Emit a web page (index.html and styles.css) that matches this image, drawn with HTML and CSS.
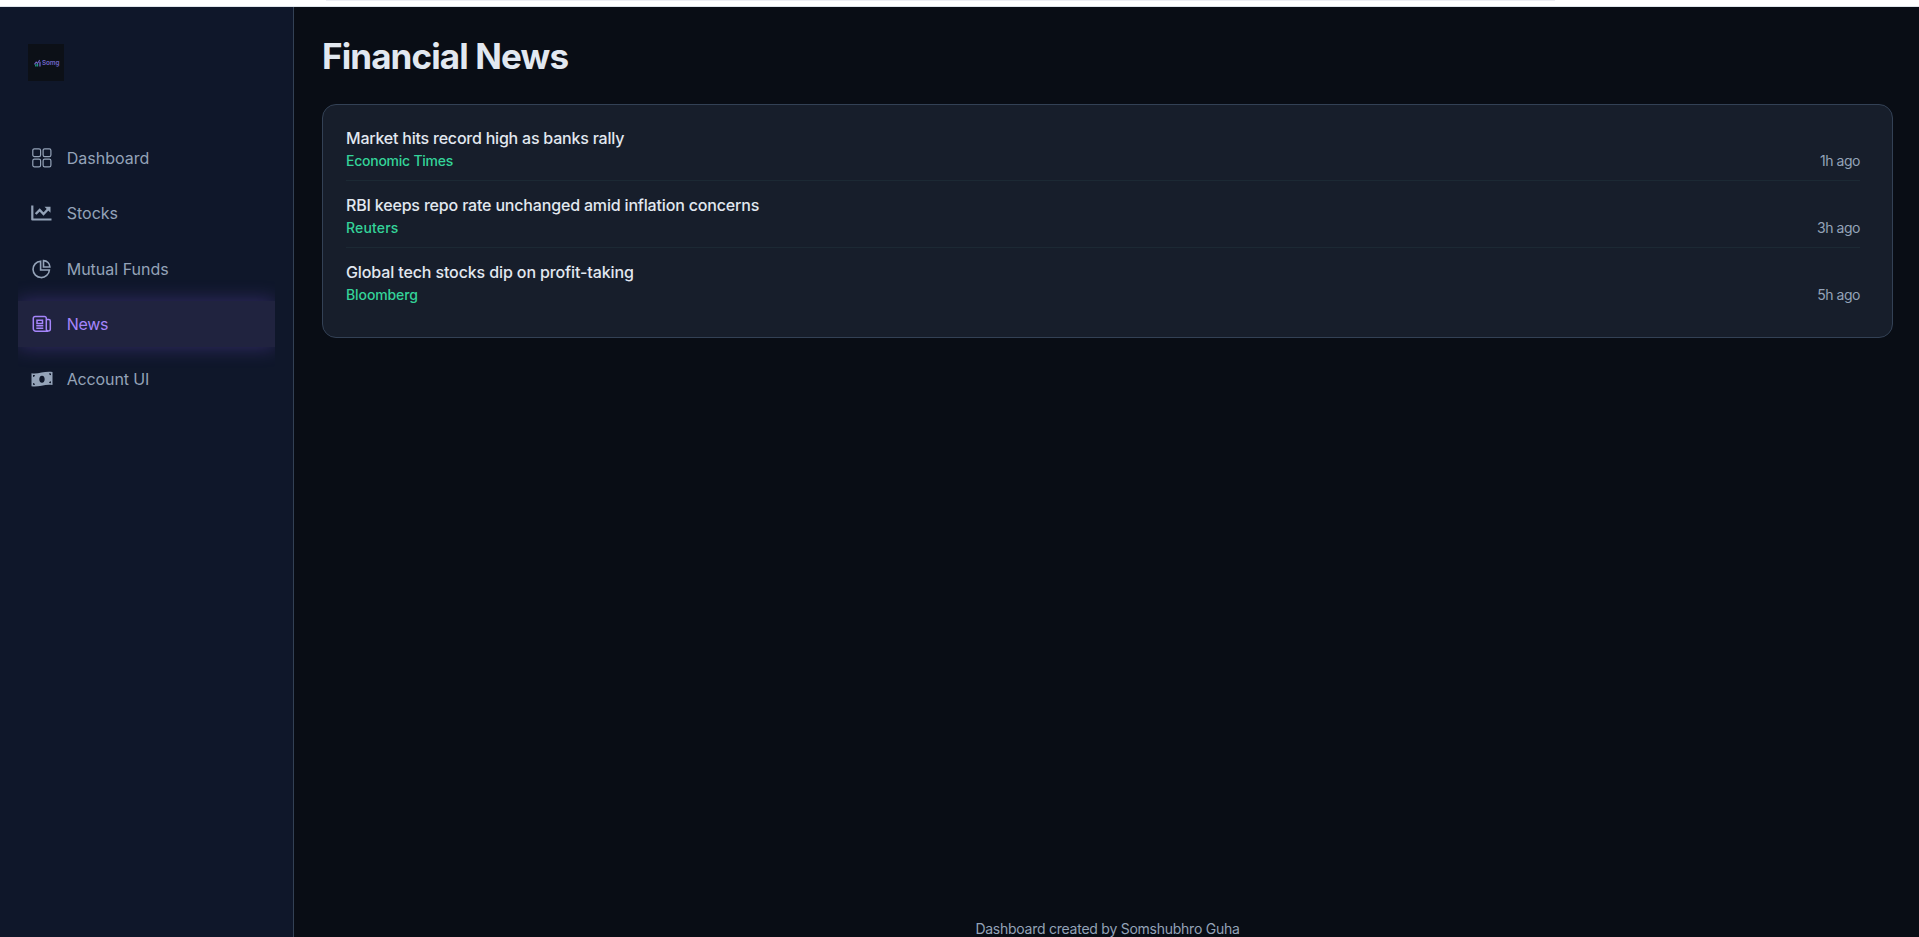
FILE: index.html
```
<!DOCTYPE html>
<html lang="en">
<head>
<meta charset="utf-8">
<title>Financial News</title>
<link rel="stylesheet" href="styles.css">
</head>
<body>
<div class="browser-edge"><div class="address-edge"></div></div>
<div class="app">
  <aside class="sidebar">
    <div class="logo">
      <svg class="logo-mark" viewBox="0 0 8 9"><path d="M.5 6 2.5 3.5 4 5 6.5 1" fill="none" stroke="#7167c4" stroke-width="1.2"/><path d="M2 8.5V6M4 8.5V5.5" stroke="#238f83" stroke-width="1.6"/><path d="M6.8 8.5V3" stroke="#7167c4" stroke-width="1.5"/></svg>
      <span>Somg</span>
    </div>
    <nav class="nav">
      <a class="nav-item"><svg viewBox="0 0 22 22" fill="none" stroke="currentColor" stroke-width="1.2"><rect x="1.8" y="1.8" width="7.8" height="7.8" rx="1.6"/><rect x="12.1" y="1.8" width="7.8" height="7.8" rx="1.6"/><rect x="1.8" y="12.1" width="7.8" height="7.8" rx="1.6"/><rect x="12.1" y="12.1" width="7.8" height="7.8" rx="1.6"/></svg><span>Dashboard</span></a>
      <a class="nav-item"><svg viewBox="0 0 22 22" fill="none" stroke="currentColor"><path d="M1.3 3.5V17.5H20.5" stroke-width="2.2" stroke-linejoin="round"/><path d="M4.7 12 8.7 8l3.8 4L17 7.2" stroke-width="2.4"/><path d="M13.5 4.8H19.5V10.8Z" fill="currentColor" stroke="none"/></svg><span>Stocks</span></a>
      <a class="nav-item"><svg viewBox="0 0 22 22" fill="none" stroke="currentColor" stroke-width="1.6"><path d="M9.6 3.2A8.2 8.2 0 1 0 18.4 12H9.6Z"/><path d="M12.5 2.6V9H18.9A6.5 6.5 0 0 0 12.5 2.6Z"/></svg><span>Mutual Funds</span></a>
      <a class="nav-item active"><svg viewBox="0 0 22 22" fill="none" stroke="currentColor" stroke-width="1.5"><path d="M17 18.2H4.8a2.5 2.5 0 0 1-2.5-2.5V5.3a1.8 1.8 0 0 1 1.8-1.8h9.4a1.8 1.8 0 0 1 1.8 1.8v10.8a2 2 0 0 0 4 0V8a1.5 1.5 0 0 0-1.5-1.5H15.3"/><path d="M6 7.2h5.5v3.3H6zM5.3 12.7h7M5.3 15.2h7"/></svg><span class="t-news">News</span></a>
      <a class="nav-item"><svg viewBox="0 0 22 22"><path fill="currentColor" fill-rule="evenodd" d="M.5 5.2C7 6.6 14 2.6 21.5 4.1V17C14 15.6 7 19.6 .5 18.2ZM11 7.7C7.4 7.7 7.4 14.7 11 14.7S14.6 7.7 11 7.7ZM2 7V9A2 2 0 0 0 4 7.1ZM20 5.5 18 5.3A2 2 0 0 0 20 7.2ZM2 16.8 4 16.9A2 2 0 0 0 2 15ZM20 15.3V13.3A2 2 0 0 0 18 15.1Z"/></svg><span class="t-account">Account UI</span></a>
    </nav>
  </aside>
  <main class="main">
    <h1>Financial News</h1>
    <section class="card">
      <article class="story"><h2 class="t-market">Market hits record high as banks rally</h2><p class="meta"><span class="source t-times">Economic Times</span><span class="time">1h ago</span></p></article>
      <article class="story"><h2 class="t-rbi">RBI keeps repo rate unchanged amid inflation concerns</h2><p class="meta"><span class="source t-reuters">Reuters</span><span class="time">3h ago</span></p></article>
      <article class="story"><h2 class="t-global">Global tech stocks dip on profit-taking</h2><p class="meta"><span class="source t-bloomberg">Bloomberg</span><span class="time">5h ago</span></p></article>
    </section>
    <footer>Dashboard created by Somshubhro Guha</footer>
  </main>
</div>
</body>
</html>
```
FILE: styles.css
```
* { box-sizing: border-box; }
body { margin: 0; height: 937px; overflow: hidden; display: flex; flex-direction: column; background: #090d15; color: #e2e8f0; font-family: Inter, "Noto Sans", sans-serif; }
h1, h2, p { margin: 0; }
.browser-edge { flex: 0 0 7px; background: #fff; border-bottom: 1px solid #dfe5eb; padding: 0 364px 0 326px; }
.address-edge { height: 1px; background: #ecedf3; }
.app { flex: 1; min-height: 0; display: flex; }
.sidebar { width: 294px; flex: none; background: #0f172a; border-right: 1px solid #334155; padding: 37px 18px 0; }
.logo { width: 36px; height: 37px; margin-left: 10px; background: #0c1017; display: flex; align-items: center; padding-left: 6px; gap: 1px; color: #7065c8; font-size: 6.4px; font-weight: 600; letter-spacing: -.1px; }
.logo-mark { width: 7px; height: 8px; }
.nav { margin-top: 43px; padding-top: 11px; height: 300px; overflow: hidden; display: flex; flex-direction: column; gap: 9px; }
.nav-item { flex: 0 0 46.3px; display: flex; align-items: center; gap: 13.7px; padding-left: 13px; color: #94a3b8; font-size: 16px; }
.nav-item svg { width: 22px; height: 22px; flex: none; }
.nav-item.active { background: #20233f; color: #a585fb; box-shadow: 0 0 20px rgba(139, 92, 246, .3); }
.main { flex: 1; display: flex; flex-direction: column; padding: 25px 26px 0 28px; }
h1 { font-size: 35px; line-height: 49px; font-weight: 700; white-space: nowrap; letter-spacing: -.88px; }
.card { margin-top: 23px; height: 234px; border: 1px solid #334155; border-radius: 14px; background: #171e2b; padding: 9px 32px 0 23px; }
.story { height: 67px; padding-top: 12px; border-bottom: 1px solid #1c2934; }
.story:last-child { border-bottom: 0; }
h2 { font-size: 16px; font-weight: 500; line-height: 25px; white-space: nowrap; }
.meta { display: flex; justify-content: space-between; font-size: 14px; line-height: 20.5px; }
.source { color: #34d399; font-weight: 500; }
.time { color: #94a3b8; letter-spacing: -.45px; }
.t-news { letter-spacing: -.3px; }
.t-account { letter-spacing: -.13px; }
.t-market { letter-spacing: -.22px; }
.t-rbi { letter-spacing: -.175px; }
.t-global { letter-spacing: -.12px; }
.t-times { letter-spacing: -.25px; }
.t-reuters { letter-spacing: .15px; }
.t-bloomberg { letter-spacing: -.1px; }
footer { margin-top: auto; text-align: center; color: #94a3b8; font-size: 14px; line-height: 16px; letter-spacing: -.25px; }
```
